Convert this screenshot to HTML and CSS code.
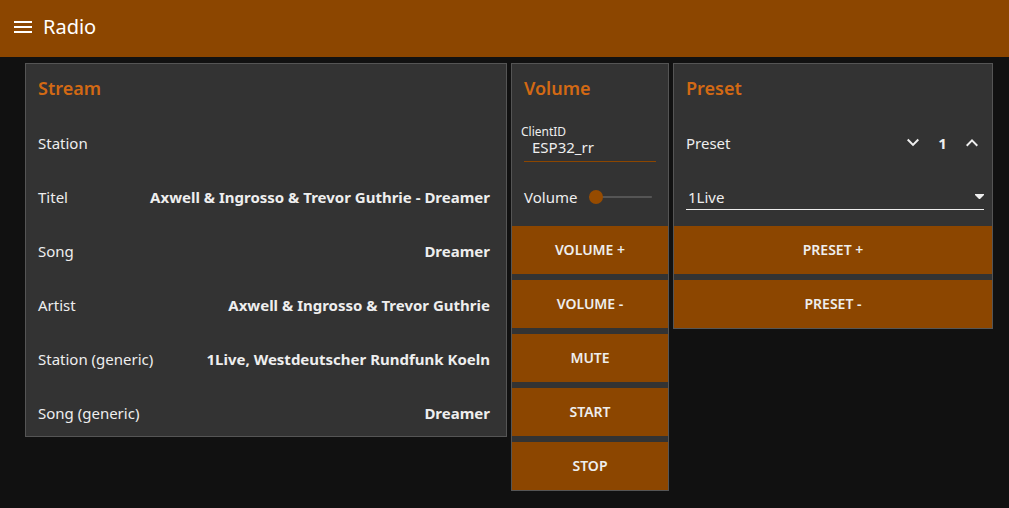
FILE: index.html
```html
<!DOCTYPE html>
<html lang="en">
<head>
<meta charset="utf-8">
<title>Radio</title>
<link rel="stylesheet" href="styles.css">
</head>
<body>
<header class="toolbar">
  <button class="menu-button" type="button" aria-label="Menu">
    <svg class="menu-icon" viewBox="0 0 24 24" aria-hidden="true"><path d="M3 18h18v-2H3v2zm0-5h18v-2H3v2zm0-7v2h18V6H3z"/></svg>
  </button>
  <h1 class="toolbar-title">Radio</h1>
</header>
<main class="dashboard">
  <section class="card card-stream">
    <h2 class="card-title">Stream</h2>
    <dl class="fields">
      <div class="row"><dt>Station</dt><dd class="value"></dd></div>
      <div class="row"><dt>Titel</dt><dd class="value">Axwell &amp; Ingrosso &amp; Trevor Guthrie - Dreamer</dd></div>
      <div class="row"><dt>Song</dt><dd class="value">Dreamer</dd></div>
      <div class="row"><dt>Artist</dt><dd class="value">Axwell &amp; Ingrosso &amp; Trevor Guthrie</dd></div>
      <div class="row"><dt>Station (generic)</dt><dd class="value">1Live, Westdeutscher Rundfunk Koeln</dd></div>
      <div class="row"><dt>Song (generic)</dt><dd class="value">Dreamer</dd></div>
    </dl>
  </section>
  <section class="card card-volume">
    <h2 class="card-title">Volume</h2>
    <div class="text-field">
      <label class="text-label" for="client">ClientID</label>
      <input class="text-input" id="client" type="text" value="ESP32_rr">
    </div>
    <div class="row slider-row">
      <label for="volume">Volume</label>
      <input class="slider" id="volume" type="range" min="0" max="100" value="0">
    </div>
    <button class="action" type="button">VOLUME +</button>
    <button class="action" type="button">VOLUME -</button>
    <button class="action" type="button">MUTE</button>
    <button class="action" type="button">START</button>
    <button class="action" type="button">STOP</button>
  </section>
  <section class="card card-preset">
    <h2 class="card-title">Preset</h2>
    <div class="row stepper-row">
      <span>Preset</span>
      <div class="stepper">
        <button class="step" type="button" aria-label="Previous preset"><svg class="step-icon" viewBox="0 0 24 24" aria-hidden="true"><path d="M7.41 7.84L12 12.42l4.59-4.58L18 9.25l-6 6-6-6z"/></svg></button>
        <output class="step-value">1</output>
        <button class="step" type="button" aria-label="Next preset"><svg class="step-icon" viewBox="0 0 24 24" aria-hidden="true"><path d="M7.41 15.41L12 10.83l4.59 4.58L18 14l-6-6-6 6z"/></svg></button>
      </div>
    </div>
    <div class="select-row">
      <div class="select-box">
        <select class="select" aria-label="Station preset"><option>1Live</option></select>
        <svg class="select-arrow" viewBox="0 0 10 6" aria-hidden="true"><path d="M1 0h9v1L6 5H5L1 1z"/></svg>
      </div>
    </div>
    <button class="action" type="button">PRESET +</button>
    <button class="action" type="button">PRESET -</button>
  </section>
</main>
</body>
</html>
```
FILE: styles.css
```css
* { box-sizing: border-box; }
body {
  margin: 0;
  background: #111;
  color: #eee;
  font: 15px/20px "Noto Sans", "Open Sans", sans-serif;
}
button, input, select { font: inherit; color: inherit; margin: 0; }
.toolbar {
  display: flex;
  align-items: center;
  gap: 8px;
  height: 57px;
  padding: 0 11px 4px;
  background: #8c4600;
  color: #fff;
}
.menu-button, .step {
  display: flex;
  padding: 0;
  border: 0;
  background: none;
}
.menu-icon { width: 24px; height: 24px; fill: #fff; }
.toolbar-title { margin: 0; font-size: 20px; line-height: 28px; font-weight: 400; }
.dashboard {
  display: grid;
  grid-template-columns: repeat(18, minmax(0, 1fr));
  column-gap: 4px;
  align-items: start;
  padding: 6px 16px 16px 25px;
}
.card {
  display: grid;
  grid-template-columns: minmax(0, 1fr);
  gap: 6px;
  background: #333;
  border: 1px solid #555;
}
.card-stream { grid-column: span 9; }
.card-volume { grid-column: span 3; }
.card-preset { grid-column: span 6; }
.card-title {
  margin: 0;
  padding: 0 12px;
  font-size: 18px;
  line-height: 48px;
  font-weight: 600;
  color: #d26914;
}
.fields { display: grid; gap: 6px; margin: 0; }
.row {
  display: flex;
  align-items: center;
  justify-content: space-between;
  height: 48px;
  padding: 2px 16px 0 12px;
  white-space: nowrap;
}
.value { margin: 0; font-weight: 700; }
.text-field {
  display: flex;
  flex-direction: column;
  height: 48px;
  padding: 7px 12px 4px;
}
.text-label { font-size: 12px; line-height: 14px; margin-left: -3px; }
.text-input {
  width: 100%;
  height: 23px;
  padding: 0 8px 6px;
  border: 0;
  border-bottom: 1px solid #8c4600;
  background: none;
  outline: 0;
}
.slider-row { gap: 12px; }
.slider {
  appearance: none;
  flex: 1;
  min-width: 0;
  height: 14px;
  background: linear-gradient(#555, #555) center / 100% 2px no-repeat;
}
.slider::-webkit-slider-thumb {
  appearance: none;
  width: 14px;
  height: 14px;
  border-radius: 50%;
  background: #964b00;
}
.stepper-row { padding-right: 8px; }
.stepper { display: flex; align-items: center; }
.step-icon { width: 24px; height: 24px; fill: #eee; }
.step-value { width: 35px; text-align: center; font-weight: 700; }
.select-row { height: 48px; padding: 12px 8px 10px 12px; }
.select-box { display: grid; align-items: center; border-bottom: 1px solid #eee; }
.select {
  appearance: none;
  grid-area: 1 / 1;
  height: 25px;
  padding: 0 2px;
  border: 0;
  background: none;
  outline: 0;
}
.select-arrow { grid-area: 1 / 1; justify-self: end; width: 10px; height: 6px; fill: #eee; pointer-events: none; }
.action {
  height: 48px;
  padding: 0 8px;
  border: 0;
  background: #8c4600;
  color: #eee;
  font-size: 14px;
  font-weight: 600;
}
```
